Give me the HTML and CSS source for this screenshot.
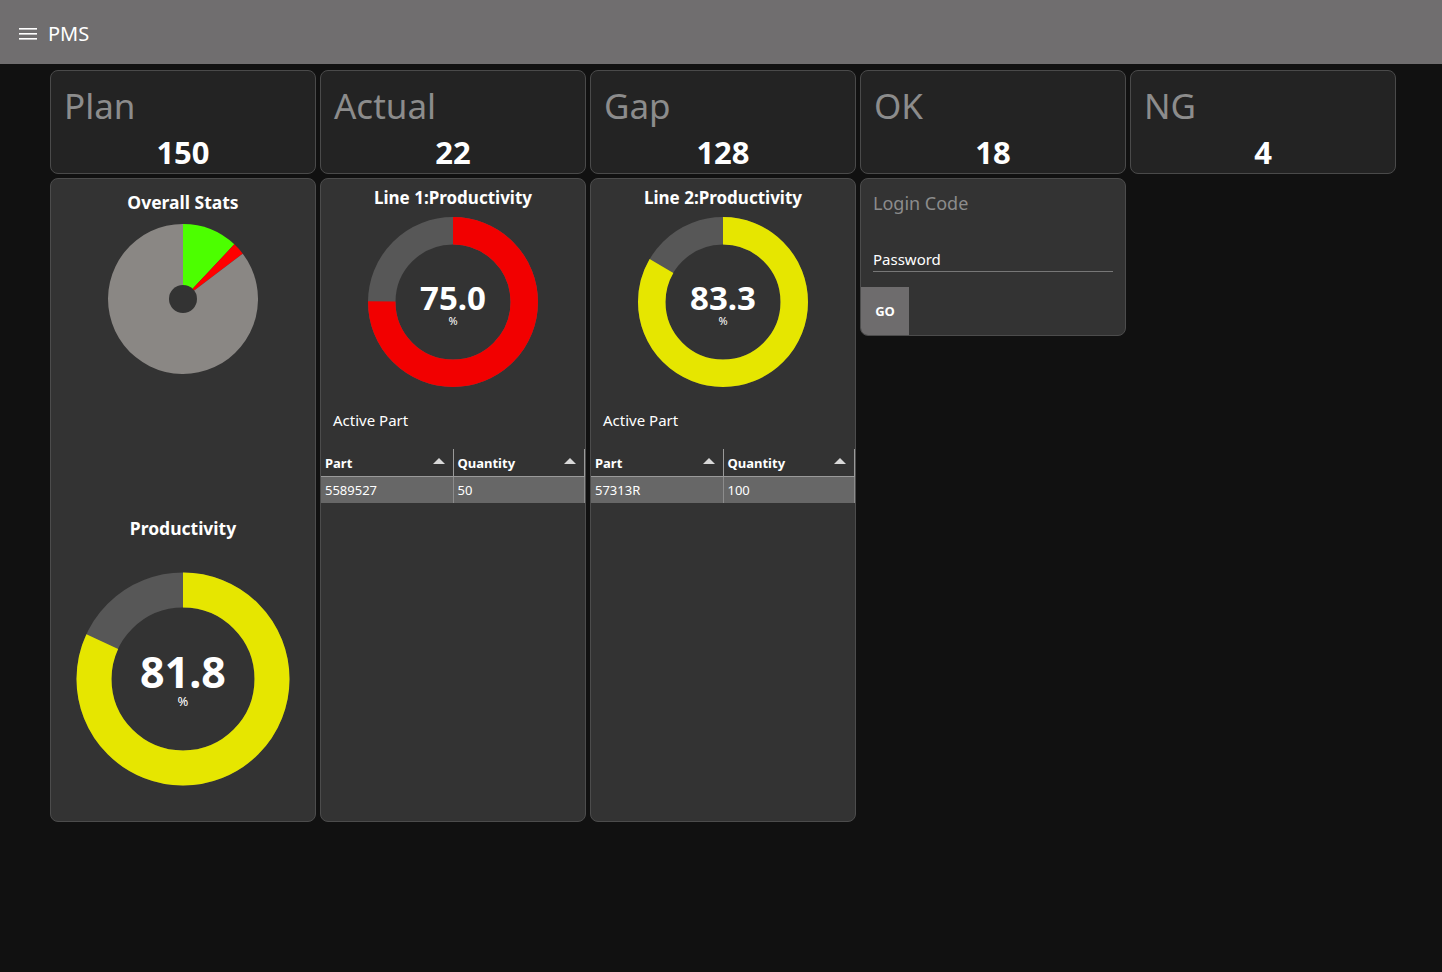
FILE: index.html
```html
<!DOCTYPE html>
<html lang="en">
<head>
  <meta charset="UTF-8">
  <meta name="viewport" content="width=device-width, initial-scale=1.0">
  <title>PMS</title>
  <link rel="stylesheet" href="styles.css">
</head>
<body>
  <header class="topbar">
    <svg class="menu-icon" width="18" height="14" viewBox="0 0 18 14">
      <rect x="0" y="1" width="18" height="1.6" fill="#fff"/>
      <rect x="0" y="6" width="18" height="1.6" fill="#fff"/>
      <rect x="0" y="11" width="18" height="1.6" fill="#fff"/>
    </svg>
    <span class="brand">PMS</span>
  </header>

  <main class="board">
    <div class="stat">
      <div class="stat-title">Plan</div>
      <div class="stat-value">150</div>
    </div>
    <div class="stat">
      <div class="stat-title">Actual</div>
      <div class="stat-value">22</div>
    </div>
    <div class="stat">
      <div class="stat-title">Gap</div>
      <div class="stat-value">128</div>
    </div>
    <div class="stat">
      <div class="stat-title">OK</div>
      <div class="stat-value">18</div>
    </div>
    <div class="stat">
      <div class="stat-title">NG</div>
      <div class="stat-value">4</div>
    </div>

    <div class="panel overall">
      <div class="panel-title">Overall Stats</div>
      <svg class="pie" width="150" height="150" viewBox="0 0 150 150">
        <path d="M75 75 L75 0 A75 75 0 0 1 126.34 20.33 Z" fill="#4cff00"/>
        <path d="M75 75 L126.34 20.33 A75 75 0 0 1 134.74 29.65 Z" fill="#ff0000"/>
        <path d="M75 75 L134.74 29.65 A75 75 0 1 1 75 0 Z" fill="#8a8784"/>
        <circle cx="75" cy="75" r="14" fill="#333"/>
      </svg>
      <div class="panel-title second">Productivity</div>
      <div class="gauge big">
        <svg width="214" height="214" viewBox="0 0 214 214">
          <circle cx="107" cy="107" r="89" fill="none" stroke="#575757" stroke-width="35"/>
          <circle cx="107" cy="107" r="89" fill="none" stroke="#e6e600" stroke-width="35"
                  stroke-dasharray="457.4 559.2" transform="rotate(-90 107 107)"/>
        </svg>
        <div class="gauge-text">
          <span class="gauge-num">81.8</span>
          <span class="gauge-unit">%</span>
        </div>
      </div>
    </div>

    <div class="panel line">
      <div class="panel-title">Line 1:Productivity</div>
      <div class="gauge">
        <svg width="170" height="170" viewBox="0 0 170 170">
          <circle cx="85" cy="85" r="71.25" fill="none" stroke="#575757" stroke-width="27.5"/>
          <circle cx="85" cy="85" r="71.25" fill="none" stroke="#f20000" stroke-width="27.5"
                  stroke-dasharray="335.8 447.7" transform="rotate(-90 85 85)"/>
        </svg>
        <div class="gauge-text">
          <span class="gauge-num">75.0</span>
          <span class="gauge-unit">%</span>
        </div>
      </div>
      <div class="label">Active Part</div>
      <table class="grid">
        <thead>
          <tr><th>Part<i class="sort"></i></th><th>Quantity<i class="sort"></i></th></tr>
        </thead>
        <tbody>
          <tr><td>5589527</td><td>50</td></tr>
        </tbody>
      </table>
    </div>

    <div class="panel line">
      <div class="panel-title">Line 2:Productivity</div>
      <div class="gauge">
        <svg width="170" height="170" viewBox="0 0 170 170">
          <circle cx="85" cy="85" r="71.25" fill="none" stroke="#575757" stroke-width="27.5"/>
          <circle cx="85" cy="85" r="71.25" fill="none" stroke="#e6e600" stroke-width="27.5"
                  stroke-dasharray="372.9 447.7" transform="rotate(-90 85 85)"/>
        </svg>
        <div class="gauge-text">
          <span class="gauge-num">83.3</span>
          <span class="gauge-unit">%</span>
        </div>
      </div>
      <div class="label">Active Part</div>
      <table class="grid">
        <thead>
          <tr><th>Part<i class="sort"></i></th><th>Quantity<i class="sort"></i></th></tr>
        </thead>
        <tbody>
          <tr><td>57313R</td><td>100</td></tr>
        </tbody>
      </table>
    </div>

    <div class="panel login">
      <div class="login-title">Login Code</div>
      <div class="field">Password</div>
      <button class="go">GO</button>
    </div>
  </main>
</body>
</html>
```

FILE: styles.css
```css
body {
  margin: 0;
  background: #111111;
  font-family: "Noto Sans", "Open Sans", sans-serif;
  color: #fff;
  height: 972px;
  overflow: hidden;
}

.topbar {
  height: 64px;
  background: #706e6f;
  display: flex;
  align-items: center;
  padding: 4px 0 0 19px;
  box-sizing: border-box;
}

.menu-icon {
  margin-right: 11px;
}

.brand {
  font-size: 20px;
  line-height: 24px;
}

.board {
  display: grid;
  grid-template-columns: repeat(5, 266px);
  grid-template-rows: 104px auto;
  gap: 4px;
  padding: 6px 0 0 50px;
  align-items: start;
}

.stat {
  height: 104px;
  box-sizing: border-box;
  background: #232323;
  border: 1px solid #4a4a4a;
  border-radius: 8px;
  padding: 16px 13px 0;
}

.stat-title {
  font-size: 35px;
  line-height: 37px;
  color: #8c8c8c;
}

.stat-value {
  font-size: 31px;
  line-height: 31px;
  font-weight: bold;
  text-align: center;
  margin-top: 13px;
}

.panel {
  background: #333333;
  border: 1px solid #4c4c4c;
  border-radius: 8px;
  box-sizing: border-box;
}

.overall,
.line {
  height: 644px;
  display: flex;
  flex-direction: column;
  align-items: center;
}

.panel-title {
  font-size: 17.5px;
  line-height: 24px;
  font-weight: bold;
}

.line .panel-title {
  font-size: 17px;
  margin-top: 7px;
}

.overall .panel-title {
  margin-top: 11px;
}

.overall .pie {
  margin-top: 10px;
}

.overall .panel-title.second {
  margin-top: 142px;
}

.overall .gauge {
  margin-top: 32px;
}

.line .gauge {
  margin-top: 7px;
}

.gauge {
  position: relative;
  line-height: 0;
}

.gauge-text {
  position: absolute;
  left: 0;
  right: 0;
  top: 0;
  display: flex;
  flex-direction: column;
  align-items: center;
  padding-top: 64px;
}

.gauge-num {
  font-size: 33px;
  line-height: 33px;
  font-weight: bold;
}

.gauge-unit {
  font-size: 11px;
  line-height: 11px;
  margin-top: 1px;
}

.big .gauge-text {
  padding-top: 78px;
}

.big .gauge-num {
  font-size: 43px;
  line-height: 43px;
}

.big .gauge-unit {
  font-size: 13px;
  line-height: 13px;
  margin-top: 2px;
}

.label {
  align-self: stretch;
  padding-left: 12px;
  margin-top: 23px;
  font-size: 15px;
  line-height: 20px;
}

.grid {
  align-self: stretch;
  margin-top: 19px;
  width: 264px;
  border-collapse: collapse;
  font-size: 13px;
}

.grid th,
.grid td {
  text-align: left;
  padding: 0 4px;
  height: 27px;
  box-sizing: border-box;
  border-right: 1px solid #9a9a9a;
}

.grid th:first-child,
.grid td:first-child {
  width: 132px;
}

.grid th {
  position: relative;
  font-weight: bold;
  padding-top: 2px;
  border-bottom: 1px solid #9a9a9a;
}

.grid td {
  background: #676767;
  border-right-color: #8c8c8c;
}

.sort {
  position: absolute;
  right: 8px;
  top: 9px;
  width: 0;
  height: 0;
  border-left: 6px solid transparent;
  border-right: 6px solid transparent;
  border-bottom: 6px solid #d8d8d8;
}

.login {
  height: 158px;
  display: flex;
  flex-direction: column;
}

.login-title {
  font-size: 18px;
  line-height: 24px;
  color: #8c8c8c;
  margin: 12px 12px 0;
}

.field {
  margin: 34px 12px 0;
  font-size: 15px;
  line-height: 20px;
  padding-bottom: 2px;
  border-bottom: 1px solid #777;
}

.go {
  margin-top: auto;
  width: 48px;
  height: 48px;
  border: none;
  border-radius: 0 0 0 7px;
  background: #6e6c6d;
  color: #fff;
  font-family: "Noto Sans", "Open Sans", sans-serif;
  font-weight: bold;
  font-size: 13px;
  cursor: pointer;
}
```
